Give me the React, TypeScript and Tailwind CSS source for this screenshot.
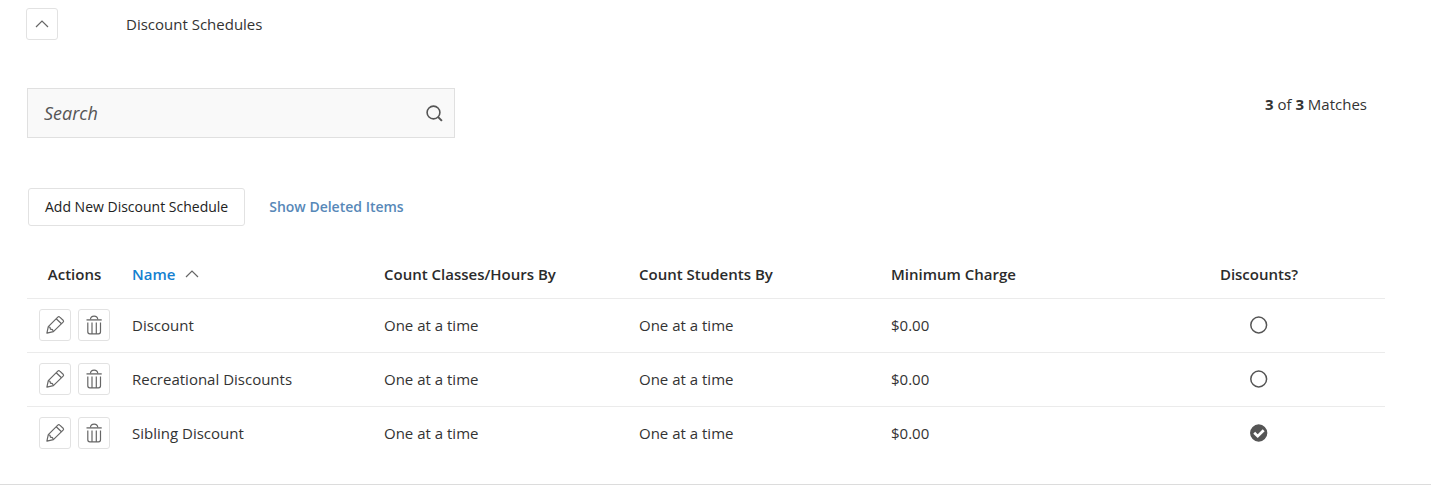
import React, { useState } from 'react';

interface Schedule {
  id: number;
  name: string;
  classesBy: string;
  studentsBy: string;
  minimum: string;
  hasDiscounts: boolean;
}

const schedules: Schedule[] = [
  { id: 1, name: 'Discount', classesBy: 'One at a time', studentsBy: 'One at a time', minimum: '$0.00', hasDiscounts: false },
  { id: 2, name: 'Recreational Discounts', classesBy: 'One at a time', studentsBy: 'One at a time', minimum: '$0.00', hasDiscounts: false },
  { id: 3, name: 'Sibling Discount', classesBy: 'One at a time', studentsBy: 'One at a time', minimum: '$0.00', hasDiscounts: true },
];

const ChevronUp: React.FC = () => (
  <svg width="14" height="8" viewBox="0 0 14 8" fill="none" stroke="#666" strokeWidth="1.2" aria-hidden="true">
    <path d="M1 7 7 1l6 6" />
  </svg>
);

const SearchIcon: React.FC = () => (
  <svg width="18" height="18" viewBox="0 0 18 18" fill="none" stroke="#555" strokeWidth="1.6" aria-hidden="true">
    <circle cx="8.5" cy="8.5" r="6.4" />
    <path d="m12.9 12.9 4 4" strokeWidth="2" />
  </svg>
);

const PencilIcon: React.FC = () => (
  <svg width="20" height="20" viewBox="0 0 20 20" fill="none" stroke="#666" strokeWidth="1.2" strokeLinejoin="round" aria-hidden="true">
    <path d="M1.9 18.1 3.3 11.7 12.8 2.1q1-1 2 0l3.3 3.1q1 1 0 2L8.4 16.6Z" />
    <path d="m11.2 3.7 5.3 5.1M3.3 11.7l1.6.6.6 1.9 2 .5.9 1.9" />
  </svg>
);

const TrashIcon: React.FC = () => (
  <svg width="18" height="20" viewBox="0 0 18 20" fill="none" stroke="#666" strokeWidth="1.2" aria-hidden="true">
    <path d="M1.5 4.9h15.2" strokeWidth="1.3" />
    <path d="M5.4 4.5C5.6 2.4 7 1.2 9.1 1.2s3.5 1.2 3.7 3.3" />
    <path d="M2.8 7.5v9.3q0 2 2 2h8.7q2 0 2-2V7.5M7 7.5v11M11.3 7.5v11" />
  </svg>
);

interface IconButtonProps {
  label: string;
  children: React.ReactNode;
  onClick?: () => void;
}

const IconButton: React.FC<IconButtonProps> = ({ label, children, onClick }) => (
  <button
    type="button"
    aria-label={label}
    onClick={onClick}
    className="flex size-8 items-center justify-center rounded-[3px] border border-[#e2e2e2] bg-white hover:bg-gray-50"
  >
    {children}
  </button>
);

interface RoundCheckProps {
  label: string;
  defaultChecked: boolean;
}

const RoundCheck: React.FC<RoundCheckProps> = ({ label, defaultChecked }) => (
  <label className="mx-auto grid size-[18px] place-items-center">
    <input
      type="checkbox"
      aria-label={label}
      defaultChecked={defaultChecked}
      className="peer col-start-1 row-start-1 size-[18px] appearance-none rounded-full"
    />
    <svg
      width="18"
      height="18"
      viewBox="0 0 18 18"
      className="pointer-events-none col-start-1 row-start-1 fill-white peer-checked:fill-[#555]"
      aria-hidden="true"
    >
      <circle cx="8.7" cy="9" r="7.9" stroke="#555" strokeWidth="1.5" />
      <path d="m4.2 8.8 3.5 3.4 6-6" fill="none" stroke="#fff" strokeWidth="2.7" />
    </svg>
  </label>
);

const App: React.FC = () => {
  const [open, setOpen] = useState(true);
  const [query, setQuery] = useState('');

  const rows = schedules.filter((s) => s.name.toLowerCase().includes(query.toLowerCase()));

  return (
    <div className="border-b border-[#dcdcdc] bg-white pt-2 pb-6 font-['Open_Sans',sans-serif] text-[15px] leading-5 text-[#333]">
      <header className="flex items-center gap-[68px] px-[26px]">
        <IconButton label="Toggle section" onClick={() => setOpen(!open)}>
          <ChevronUp />
        </IconButton>
        <h2>Discount Schedules</h2>
      </header>

      {open && (
        <main className="mt-12 pr-[46px] pl-[27px]">
          {/* Search */}
          <div className="flex items-start justify-between">
            <label className="flex h-[50px] w-[428px] items-center border border-[#e0e0e0] bg-[#f9f9f9] pr-[11px] pl-4">
              <input
                type="text"
                aria-label="Search"
                placeholder="Search"
                value={query}
                onChange={(e) => setQuery(e.target.value)}
                className="min-w-0 flex-1 bg-transparent text-lg outline-none placeholder:text-[#555] placeholder:italic"
              />
              <SearchIcon />
            </label>
            <p className="mt-1.5 mr-[18px]">
              <strong>{rows.length}</strong> of <strong>{schedules.length}</strong> Matches
            </p>
          </div>

          {/* Toolbar */}
          <div className="mt-[50px] flex items-center gap-6 pl-px text-sm font-semibold">
            <button type="button" className="h-[38px] rounded-[3px] border border-[#e2e2e2] px-4 font-medium text-[#222]">
              Add New Discount Schedule
            </button>
            <a href="#deleted" className="text-[#5788b8]">
              Show Deleted Items
            </a>
          </div>

          <table className="mt-6 w-full table-fixed border-collapse text-left">
            <thead>
              <tr className="h-12 border-b border-[#ebebeb] text-[#2b2b2b] *:font-semibold">
                <th className="w-[95px] text-center">Actions</th>
                <th className="px-2.5" aria-sort="ascending">
                  <a href="#name" className="flex items-center gap-2.5 text-[#1480d0]">
                    Name <ChevronUp />
                  </a>
                </th>
                <th className="w-[255px] px-2.5">Count Classes/Hours By</th>
                <th className="px-2.5">Count Students By</th>
                <th className="px-2.5">Minimum Charge</th>
                <th className="text-center">Discounts?</th>
              </tr>
            </thead>
            <tbody>
              {rows.map((row) => (
                <tr key={row.id} className="h-[54px] border-b border-[#ebebeb] last:border-b-0">
                  <td>
                    <div className="flex justify-center gap-[7px]">
                      <IconButton label={`Edit ${row.name}`}>
                        <PencilIcon />
                      </IconButton>
                      <IconButton label={`Delete ${row.name}`}>
                        <TrashIcon />
                      </IconButton>
                    </div>
                  </td>
                  <td className="px-2.5">{row.name}</td>
                  <td className="px-2.5">{row.classesBy}</td>
                  <td className="px-2.5">{row.studentsBy}</td>
                  <td className="px-2.5">{row.minimum}</td>
                  <td>
                    <RoundCheck label={`${row.name} has discounts`} defaultChecked={row.hasDiscounts} />
                  </td>
                </tr>
              ))}
            </tbody>
          </table>
        </main>
      )}
    </div>
  );
};

export default App;
